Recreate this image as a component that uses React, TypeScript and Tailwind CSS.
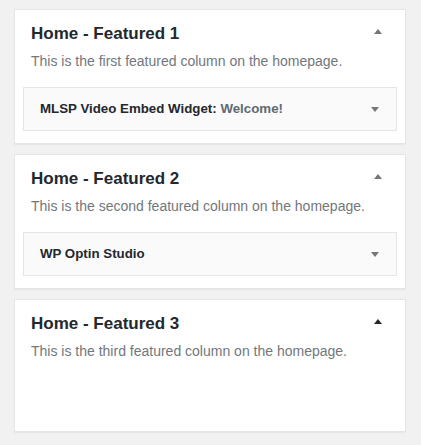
import React from 'react';

type Area = {
  title: string;
  description: string;
  widget?: { name: string; note?: string };
  active?: boolean;
};

const areas: Area[] = [
  {
    title: 'Home - Featured 1',
    description: 'This is the first featured column on the homepage.',
    widget: { name: 'MLSP Video Embed Widget', note: 'Welcome!' },
  },
  {
    title: 'Home - Featured 2',
    description: 'This is the second featured column on the homepage.',
    widget: { name: 'WP Optin Studio' },
  },
  {
    title: 'Home - Featured 3',
    description: 'This is the third featured column on the homepage.',
    active: true,
  },
];

const Caret: React.FC<{ up?: boolean; className?: string }> = ({ up, className }) => (
  <svg width="8" height="5" viewBox="0 0 8 5" className={className}>
    {up ? <path d="M0 5 L4 0 L8 5 Z" fill="currentColor" /> : <path d="M0 0 L8 0 L4 5 Z" fill="currentColor" />}
  </svg>
);

const SidebarCard: React.FC<{ area: Area }> = ({ area }) => (
  <div className="bg-white border border-[#e5e5e5] shadow-[0_1px_1px_rgba(0,0,0,0.04)] px-2 pb-3 min-h-[133px]">
    <div className="flex items-start justify-between pl-2 pr-[15px] pt-[13px]">
      <h2 className="text-[17px] leading-[22px] font-bold text-[#23282d]">{area.title}</h2>
      <Caret up className={`mt-[6px] ${area.active ? 'text-[#23282d]' : 'text-[#72777c]'}`} />
    </div>
    <p className="pl-2 mt-[7px] text-[14px] leading-[19px] text-[#72777c]">{area.description}</p>
    {area.widget && (
      <div className="mt-[16px] h-[44px] bg-[#fafafa] border border-[#e5e5e5] flex items-center justify-between pl-4 pr-[17px]">
        <span className="text-[13.3px] font-bold text-[#23282d]">
          {area.widget.name}
          {area.widget.note && (
            <>
              : <span className="text-[#606a73]">{area.widget.note}</span>
            </>
          )}
        </span>
        <Caret className="text-[#72777c]" />
      </div>
    )}
  </div>
);

export default function App() {
  return (
    <div
      className="min-h-screen bg-[#f1f1f1] pl-[14px] pr-[15px] pt-[9px] pb-3 flex flex-col gap-[10px]"
      style={{ fontFamily: '"Liberation Sans", Arial, sans-serif' }}
    >
      {areas.map((a) => (
        <SidebarCard key={a.title} area={a} />
      ))}
    </div>
  );
}
